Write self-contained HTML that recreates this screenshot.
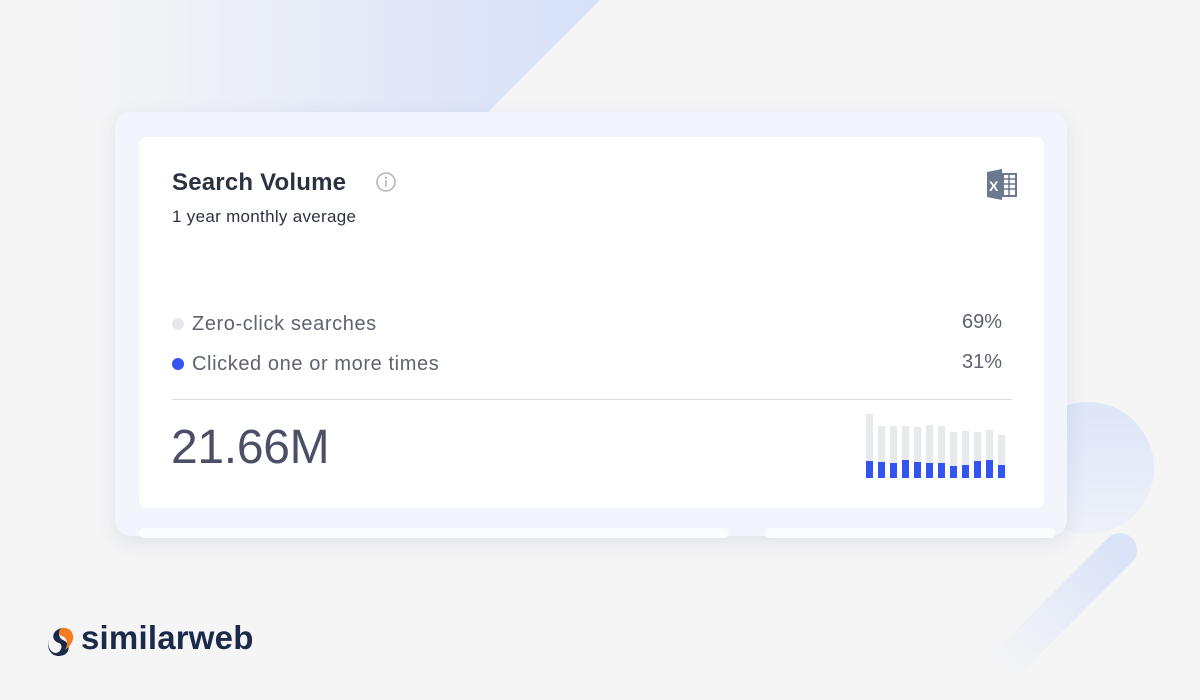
<!DOCTYPE html>
<html><head><style>
body{margin:0;width:1200px;height:700px;background:#f5f5f6;position:relative;overflow:hidden;font-family:"Liberation Sans",sans-serif}
.abs{position:absolute}
</style></head><body>
<svg class="abs" style="left:0;top:0" width="1200" height="700">
<defs>
<linearGradient id="g1" x1="0" y1="0" x2="1" y2="0"><stop offset="0" stop-color="#f5f5f6"/><stop offset="1" stop-color="#d6e0f8"/></linearGradient>
<linearGradient id="g2" x1="0" y1="0" x2="0" y2="1"><stop offset="0" stop-color="#dde5f8"/><stop offset="1" stop-color="#eef1f8"/></linearGradient>
<linearGradient id="g3" x1="1" y1="0" x2="0" y2="1"><stop offset="0" stop-color="#dae3f8"/><stop offset="1" stop-color="#f5f5f6"/></linearGradient>
</defs>
<polygon points="80,0 600,0 480,120 80,120" fill="url(#g1)"/>
<circle cx="1088" cy="468" r="66" fill="url(#g2)"/>
<path d="M1120 550 L1000 670" stroke="url(#g3)" stroke-width="34" stroke-linecap="round"/>
</svg>
<div class="abs" style="left:115px;top:112px;width:952px;height:424px;background:#f2f5fb;border-radius:16px;box-shadow:0 6px 20px rgba(40,60,110,.10)"></div>
<div class="abs" style="left:139px;top:528px;width:590px;height:10px;background:#fbfcfe;border-radius:6px"></div>
<div class="abs" style="left:765px;top:528px;width:290px;height:10px;background:#fbfcfe;border-radius:6px"></div>
<div class="abs" style="left:139px;top:137px;width:905px;height:371px;background:#fff;border-radius:8px"></div>
<div class="abs" style="left:172px;top:169px;font-size:24px;color:#2b3240;font-weight:bold;letter-spacing:0.2px">Search Volume</div>
<svg class="abs" style="left:375px;top:171px" width="22" height="22"><circle cx="11" cy="11" r="9" fill="none" stroke="#aeb2b8" stroke-width="1.5"/><circle cx="11" cy="6.8" r="1.2" fill="#aeb2b8"/><rect x="10.2" y="9.3" width="1.6" height="6.5" fill="#aeb2b8"/></svg>
<div class="abs" style="left:172px;top:207px;font-size:17px;color:#2b3240;letter-spacing:0.3px">1 year monthly average</div>
<svg class="abs" style="left:986px;top:169px" width="32" height="32"><polygon points="1,3 16,0 16,31 1,28" fill="#6a7890"/><text x="3" y="22" font-size="14" font-weight="bold" fill="#fff" font-family="Liberation Sans">X</text><rect x="17" y="5" width="13" height="22" fill="none" stroke="#6a7890" stroke-width="2"/><path d="M17 10H30M17 15H30M17 20H30M23 5V27" stroke="#6a7890" stroke-width="1.5"/></svg>
<div class="abs" style="left:172px;top:318px;width:12px;height:12px;border-radius:50%;background:#e6e8ec"></div>
<div class="abs" style="left:192px;top:313px;font-size:20px;color:#5d6470;letter-spacing:0.6px">Zero-click searches</div>
<div class="abs" style="left:962px;top:311px;font-size:20px;color:#5d6470">69%</div>
<div class="abs" style="left:172px;top:358px;width:12px;height:12px;border-radius:50%;background:#3454f0"></div>
<div class="abs" style="left:192px;top:353px;font-size:20px;color:#5d6470;letter-spacing:0.6px">Clicked one or more times</div>
<div class="abs" style="left:962px;top:351px;font-size:20px;color:#5d6470">31%</div>
<div class="abs" style="left:172px;top:399px;width:840px;height:1px;background:#d9dce1"></div>
<div class="abs" style="left:171px;top:420px;font-size:48px;color:#4b5068;letter-spacing:-0.3px">21.66M</div>
<svg class="abs" style="left:860px;top:405px" width="160" height="80">
<g fill="#e8e9ed">
<rect x="6" y="9" width="7" height="64"/><rect x="18" y="21" width="7" height="52"/><rect x="30" y="21" width="7" height="52"/><rect x="42" y="21" width="7" height="52"/><rect x="54" y="22" width="7" height="51"/><rect x="66" y="20" width="7" height="53"/><rect x="78" y="21" width="7" height="52"/><rect x="90" y="27" width="7" height="46"/><rect x="102" y="26" width="7" height="47"/><rect x="114" y="27" width="7" height="46"/><rect x="126" y="25" width="7" height="48"/><rect x="138" y="30" width="7" height="43"/>
</g>
<g fill="#3454f0">
<rect x="6" y="56" width="7" height="17"/><rect x="18" y="57" width="7" height="16"/><rect x="30" y="58" width="7" height="15"/><rect x="42" y="55" width="7" height="18"/><rect x="54" y="57" width="7" height="16"/><rect x="66" y="58" width="7" height="15"/><rect x="78" y="58" width="7" height="15"/><rect x="90" y="61" width="7" height="12"/><rect x="102" y="60" width="7" height="13"/><rect x="114" y="56" width="7" height="17"/><rect x="126" y="55" width="7" height="18"/><rect x="138" y="60" width="7" height="13"/>
</g></svg>
<svg class="abs" style="left:46px;top:626px" width="32" height="32">
<path d="M16 2 C6 4 4 14 13 17 C18 19 15 27 9 27 C3 25 1 19 3 13 C0 21 4 30 13 30 C24 30 26 18 17 14 C12 12 12 5 16 2Z" fill="#1b2a4a"/>
<path d="M16 2 C23 1 28 6 27 13 C26 18 22 22 19 24 C22 19 22 12 16 10 C12 9 12 4 16 2Z" fill="#f57c1f"/>
</svg>
<div class="abs" style="left:81px;top:619px;font-size:33px;font-weight:bold;color:#1b2a4a;letter-spacing:0.2px">similarweb</div>
</body></html>
